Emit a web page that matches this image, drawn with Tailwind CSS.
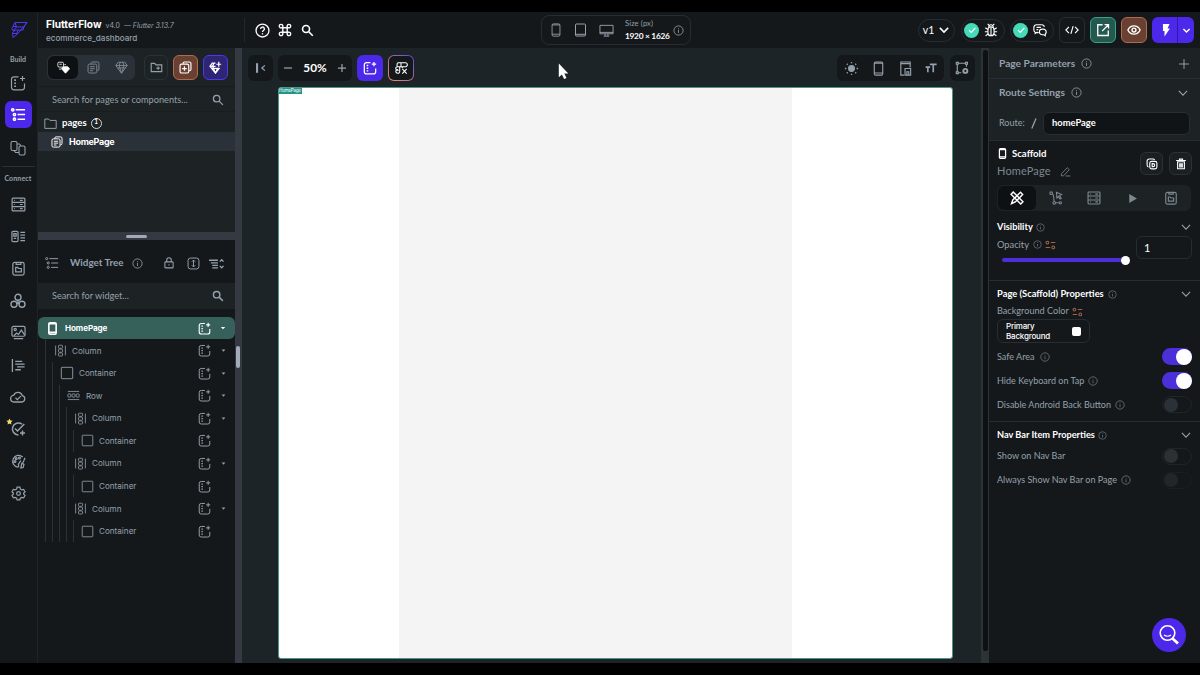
<!DOCTYPE html>
<html lang="en">
<head>
    <meta charset="UTF-8">
    <meta name="viewport" content="width=device-width, initial-scale=1.0">
    <title>FlutterFlow</title>
    <script src="https://cdn.jsdelivr.net/npm/@tailwindcss/browser@4"></script>
</head>
<body class="bg-black w-[1200px] h-[675px] overflow-hidden py-3 font-['Lato','Liberation_Sans',sans-serif] text-[#95a1ac] leading-none">

    <!-- Icon sprite -->
    <svg class="hidden">
        <defs>
            <symbol id="logo" viewBox="0 0 18 18"><path d="M5 1.500h12l-3 4.500H6.500zM5 1.500 3 5.500l-1.200 2 1.200 2L6.500 6M5 9h8l1-3M5 9l-2.500 3 .5 4.500L6.500 14 8 9M3 9.500 5 9M2.500 12.500H8L17 1.500M3 5.500h3.500" /></symbol>
            <symbol id="add-widget" viewBox="0 0 16 16"><path d="M8.500 1.800H4a2.500 2.500 0 0 0-2.500 2.500v8A2.500 2.500 0 0 0 4 14.800h8a2.500 2.500 0 0 0 2.500-2.500V8.500M12.500 1v5M10 3.500h5" /><path d="M4.200 4.300h1.800v1.600H4.200zM4.200 7.400h1.800V9H4.200zM4.200 10.500h1.800v1.600H4.200z" fill="currentColor" stroke="none"/></symbol>
            <symbol id="tree" viewBox="0 0 16 16"><circle cx="1.900" cy="3" r="1.200"/><circle cx="3.700" cy="8" r="1.200"/><circle cx="3.700" cy="13" r="1.200"/><path d="M5 3h10M7 8h8M7 13h8" /></symbol>
            <symbol id="storyboard" viewBox="0 0 16 16"><rect x="1" y="1.500" width="6" height="9" rx="1.500"/><rect x="9" y="6" width="6" height="9" rx="1.500"/><path d="M7 4h2.500l1.500 2M4 10.500l1.500 2H9" /></symbol>
            <symbol id="database" viewBox="0 0 16 16"><rect x="1.200" y="1.200" width="13.600" height="13.600" rx="1"/><path d="M1.200 5.700h13.600M1.200 10.300h13.600M9.500 3.500h3M9.500 8h3M9.500 12.500h3M3.500 3.500h.8M3.500 8h.8M3.500 12.500h.8" /></symbol>
            <symbol id="datatype" viewBox="0 0 16 16"><rect x="1" y="2.500" width="6.500" height="11" rx="1.200"/><path d="M3 5h2.500v2.500H3zM3 10h2.500M10 3.500h5M10 6.500h5M10 9.500h5M10 12.500h5" /></symbol>
            <symbol id="clip" viewBox="0 0 16 16"><rect x="2" y="1.500" width="12" height="13.500" rx="2"/><path d="M5.500 1.500v2h5v-2M5 11.500V6.800h2l1 1.200h3v3.500z" /></symbol>
            <symbol id="api" viewBox="0 0 16 16"><circle cx="8" cy="4.300" r="3"/><circle cx="4" cy="11.300" r="3"/><circle cx="12" cy="11.300" r="3"/><path d="M8 7.300v2.500L6.500 11M8 9.800l1.500 1.200" /></symbol>
            <symbol id="media" viewBox="0 0 16 16"><rect x="1" y="1.500" width="14" height="10.500" rx="1.500"/><circle cx="4.500" cy="4.700" r="1.200"/><path d="M3 11.500l3-3 2 1.500 3-4.500 3.500 5M3 14.600h10" /></symbol>
            <symbol id="textbars" viewBox="0 0 16 16"><path d="M1.500 1v14M4.500 3.500H12M4.500 6.500h10M6.500 9.500h8M4.500 12.500h6" /></symbol>
            <symbol id="cloud" viewBox="0 0 16 16"><path d="M4.200 13h7.600a3.200 3.200 0 0 0 .5-6.300A4.500 4.500 0 0 0 3.800 6.200a3.400 3.400 0 0 0 .4 6.800zM5.500 8.800l1.800 1.800 3.500-3.500" /></symbol>
            <symbol id="taskcheck" viewBox="0 0 16 16"><path d="M12 3.200A6 6 0 1 0 8.500 14M5 7.500l2.500 2.500 6.800-7M12.500 9.500v5M10 12h5" /></symbol>
            <symbol id="palette" viewBox="0 0 16 16"><path d="M12.500 3.200A6.300 6.300 0 1 0 7.500 14c1.500-.2 0-2 1-3" /><circle cx="4.200" cy="8" r="1"/><circle cx="5.500" cy="4.900" r="1"/><circle cx="9" cy="4.200" r="1"/><path d="M15 4l-2.500 6M11.500 10l2.300 1-.8 3.500-2.500.5zM10.500 7l-3 4.500" /></symbol>
            <symbol id="gear" viewBox="0 0 16 16"><path d="M6.500 1.300h3l.5 2 1.500.9 2-.6 1.500 2.600-1.500 1.400v1l1.500 1.500-1.500 2.500-2-.5-1.500.8-.5 2h-3l-.5-2-1.500-.8-2 .5L1 10.100l1.500-1.500v-1L1 6.200l1.500-2.600 2 .6L6 3.300z" /><circle cx="8" cy="8.100" r="2"/></symbol>
            <symbol id="search" viewBox="0 0 16 16"><circle cx="6.200" cy="6.200" r="4.300"/><path d="M9.500 9.500l5 5" /></symbol>
            <symbol id="pages" viewBox="0 0 16 16"><path d="M5 3.500V3a1.800 1.800 0 0 1 1.800-1.800h6A1.800 1.800 0 0 1 14.700 3v7a1.800 1.800 0 0 1-1.800 1.800h-.4" /><rect x="1.300" y="3.800" width="10.700" height="11" rx="1.800"/><path d="M3.800 7h5.700M3.800 9.500h5.700M3.800 12h3.500" /></symbol>
            <symbol id="gem" viewBox="0 0 16 16"><path d="M4 1.500h8l3 4L8 15 1 5.500zM1 5.500h14M5 5.500l3 9.500 3-9.500-1.500-4M5 5.500l1.500-4M3 8.500h10" /></symbol>
            <symbol id="pagegem" viewBox="0 0 16 16"><rect x="1" y="1.500" width="7" height="6" rx="1.500"/><path d="M3 4h3M2.500 10h2.500M9 4.500h2" /><path d="M7.800 7h5.400l2.300 2.500-5 5.500-5-5.500z" fill="currentColor"/></symbol>
            <symbol id="gemplus" viewBox="0 0 16 16"><path d="M8 2.500H4L1.200 6.500 8 15l5-6.500M1.200 6.500H8M4.500 6.500 8 15l2.500-6M4.500 6.500l1.500-4M12 1v6M9 4h6M2.800 9h10" /></symbol>
            <symbol id="folder" viewBox="0 0 16 16"><path d="M1 2.500h4.800l1.500 1.700H15V14H1z" /></symbol>
            <symbol id="folderplus" viewBox="0 0 16 16"><path d="M1.500 3h4.300l1.500 1.700h7.200V13h-13zM10 6.700v4M8 8.700h4" /></symbol>
            <symbol id="addpage" viewBox="0 0 16 16"><path d="M5 3.500V3a1.800 1.800 0 0 1 1.800-1.800h6A1.800 1.800 0 0 1 14.700 3v7a1.800 1.800 0 0 1-1.800 1.800h-.4" /><rect x="1.300" y="3.800" width="10.700" height="11" rx="1.800"/><path d="M6.700 6.500v5.600M3.900 9.300h5.600" /></symbol>
            <symbol id="info" viewBox="0 0 16 16"><circle cx="8" cy="8" r="6.700"/><path d="M8 7v4.500M8 4.300v1.200" /></symbol>
            <symbol id="lock" viewBox="0 0 16 16"><rect x="2.500" y="6.500" width="11" height="8" rx="1"/><path d="M5 6.500V4a3 3 0 0 1 6 0v2.500M8 9.800v1.600" /></symbol>
            <symbol id="expand" viewBox="0 0 16 16"><rect x="1.300" y="1.300" width="13.400" height="13.400" rx="3"/><path d="M8 4v8M6 5.800l2-2 2 2M6 10.200l2 2 2-2" /></symbol>
            <symbol id="collapse" viewBox="0 0 16 16"><path d="M0 4.500h9.500M2 7.300h7.500M3.500 10h6M3.500 12.700h6M11.500 6l2-2 2 2M11.500 10.500l2 2 2-2" /></symbol>
            <symbol id="phone" viewBox="0 0 16 16"><rect x="3.500" y="1" width="9" height="14" rx="1.500"/><path d="M3.500 12.800h9M3.500 2.200h9" /></symbol>
            <symbol id="column" viewBox="0 0 16 16"><path d="M2 2v12M14 2v12" /><rect x="5.500" y="1.500" width="5" height="3.800" rx="1"/><rect x="5.500" y="6.300" width="5" height="3.800" rx="1"/><rect x="5.500" y="11" width="5" height="3.800" rx="1"/></symbol>
            <symbol id="row" viewBox="0 0 16 16"><path d="M1 3h14M1 13h14" /><rect x="1" y="6" width="3.700" height="4" rx="1"/><rect x="6.200" y="6" width="3.700" height="4" rx="1"/><rect x="11.300" y="6" width="3.700" height="4" rx="1"/></symbol>
            <symbol id="box" viewBox="0 0 16 16"><rect x="1.500" y="1.500" width="13" height="13" rx=".8"/></symbol>
            <symbol id="caret" viewBox="0 0 8 8"><path d="M1 2.500h6L4 5.800z" fill="currentColor" stroke="none"/></symbol>
            <symbol id="chevron" viewBox="0 0 16 16"><path d="M2.500 5.200 8 10.800l5.500-5.600" /></symbol>
            <symbol id="help" viewBox="0 0 16 16"><circle cx="8" cy="8" r="6.900"/><path d="M6 6.300a2 2 0 1 1 3 1.700c-.8.500-1 .8-1 1.600M8 11v1.200" /></symbol>
            <symbol id="cmd" viewBox="0 0 16 16"><path d="M5.500 5.500h5v5h-5zM5.500 5.500H3.800A2 2 0 1 1 5.500 3.800zM10.500 5.500V3.800A2 2 0 1 1 12.200 5.500zM10.500 10.500h1.700a2 2 0 1 1-1.700 1.700zM5.500 10.500v1.700a2 2 0 1 1-1.700-1.700z" /></symbol>
            <symbol id="monitor" viewBox="0 0 16 16"><path d="M1 2.500h14v9H1zM1 10h14M5 14h6M6.500 11.500V14M9.500 11.500V14" /></symbol>
            <symbol id="bug" viewBox="0 0 16 16"><rect x="4.500" y="4.500" width="7" height="10" rx="3.500"/><path d="M8 5v9M5.500 4.500a2.500 2.500 0 0 1 5 0M5.500 2.500 4.300 1M10.500 2.500 11.700 1M4.500 7.500 1.500 5.500M4.500 10h-3.500M4.800 12.500l-3 2M11.500 7.500l3-2M11.500 10H15M11.200 12.500l3 2" /></symbol>
            <symbol id="chat" viewBox="0 0 16 16"><path d="M2.500 10.500V12l2-1.300h1M6.500 11H4a3 3 0 0 1-3-3V5a3 3 0 0 1 3-3h6a3 3 0 0 1 3 2.500M4 5h5M4 7.500h2" /><path d="M14 14.500v-1.800A3.300 3.300 0 0 0 11.500 7h-1a3.200 3.200 0 0 0 0 6.400h1.800z" /></symbol>
            <symbol id="code" viewBox="0 0 16 16"><path d="M4.500 4.500 1 8l3.500 3.500M11.500 4.500 15 8l-3.500 3.500M9.300 3.500l-2.600 9" /></symbol>
            <symbol id="open" viewBox="0 0 16 16"><path d="M7.500 2H2v12.300h12V8.500M7 9.300 13.800 2.300M9.800 1.800h4.500v4.500" /></symbol>
            <symbol id="eye" viewBox="0 0 16 16"><path d="M1 8c1.500-3 4-4.700 7-4.700S13.500 5 15 8c-1.500 3-4 4.700-7 4.700S2.500 11 1 8z" /><circle cx="8" cy="8" r="2.200"/></symbol>
            <symbol id="bolt" viewBox="0 0 16 16"><path d="M4.500 1H12L9.800 6.300H12.500L6.300 15.500V9H4.500z" fill="currentColor" stroke="none"/></symbol>
            <symbol id="collapseleft" viewBox="0 0 16 16"><path d="M3.500 2.500v11" stroke-width="2.400"/><path d="M12.500 5 9 8l3.500 3" /></symbol>
            <symbol id="custom" viewBox="0 0 16 16"><path d="M3.500 6V3.500A1.500 1.500 0 0 1 5 2h8a2 2 0 0 1 0 4.500H4a2 2 0 0 0 0 4h1.500M6.500 6.500V12a2.200 2.200 0 1 1-2-2.300M8 2v4.500M10.500 6.500 9 8M9.500 9l5 5.500M14.500 9l-5 5.500" /></symbol>
            <symbol id="sun" viewBox="0 0 16 16"><circle cx="8" cy="8" r="3" fill="currentColor"/><path d="M8 1v1.500M8 13.500V15M1 8h1.500M13.500 8H15M3 3l1 1M12 12l1 1M3 13l1-1M12 4l1-1" /></symbol>
            <symbol id="devices" viewBox="0 0 16 16"><path d="M6.500 15H3V1h10v6M3 2.800h10" /><path d="M7.500 15V8h6v7zM9.500 15v-3.500h2V15" /></symbol>
            <symbol id="textsize" viewBox="0 0 16 16"><path d="M6.500 3.200h9M11 3.200V13.500M.8 6.800h6M3.800 6.800v6.700" stroke-width="2.200"/></symbol>
            <symbol id="nodes" viewBox="0 0 16 16"><path d="M1.500 1.500h2.200v2.200H1.500zM12 1.500h2.200v2.200H12zM1.500 12.300h2.200v2.200H1.500zM3.700 2.600H12M2.600 3.700v8.600M13.100 3.700v3M3.700 13.400h3.500" /><circle cx="11.800" cy="11.300" r="2.300" stroke-width="2.200"/></symbol>
            <symbol id="plus" viewBox="0 0 16 16"><path d="M8 1.500v13M1.500 8h13" /></symbol>
            <symbol id="minus" viewBox="0 0 16 16"><path d="M1.500 8h13" /></symbol>
            <symbol id="copy" viewBox="0 0 16 16"><rect x="5" y="4.500" width="9.500" height="10" rx="2.500"/><path d="M3.500 12A2.500 2.500 0 0 1 1.500 9.500V4A2.700 2.700 0 0 1 4.200 1.300H9A2.500 2.500 0 0 1 11.500 2.500M8.200 7.500v4h1.300a1.800 1.800 0 0 0 0-4z" /></symbol>
            <symbol id="trash" viewBox="0 0 16 16"><path d="M3.500 5h9v9.300h-9zM1.500 3.300h13M6 3V1.500h4V3M6.300 7v5.500M9.700 7v5.500M8 7v5.500" /></symbol>
            <symbol id="pencil" viewBox="0 0 16 16"><path d="M2 11.500 10.500 2.500l3 2.800L5 14.300H2zM8 14.500h7" /></symbol>
            <symbol id="design" viewBox="0 0 16 16"><path d="M3.700 1.200 1.200 3.700 12.300 14.800l2.500-2.500zM12 1.500l2.500 2.500L6 12.500l-4.300 2 1.500-4.300z" /></symbol>
            <symbol id="actions" viewBox="0 0 16 16"><circle cx="2.500" cy="2.500" r="1.500"/><circle cx="6" cy="13.500" r="1.500"/><circle cx="13" cy="13.500" r="1.300"/><path d="M4 3.500c2 1 1 6 2 8.500M7.500 13.500h4M8.500 1.500l6 2.500-2.500 1.300 2 3-1.300.8-2-3L9 8z" /></symbol>
            <symbol id="play" viewBox="0 0 16 16"><path d="M4 2.500 13.500 8 4 13.500z" fill="currentColor" stroke="none"/></symbol>
            <symbol id="var" viewBox="0 0 16 14"><circle cx="3.500" cy="3.500" r="2"/><circle cx="12" cy="10.500" r="2"/><path d="M8.500 3.500H15M1 10.500h6.500" /></symbol>
            <symbol id="check" viewBox="0 0 16 16"><path d="M4 8.300 7 11.300l5.500-6" /></symbol>
            <symbol id="star" viewBox="0 0 16 16"><path d="M8 1l2.200 4.700 5.100.6-3.800 3.500 1 5.100L8 12.400l-4.500 2.500 1-5.100L.7 6.300l5.100-.6z" fill="currentColor" stroke="none"/></symbol>
        </defs>
    </svg>

    <!-- Header -->
    <header class="flex items-center h-9 bg-[#14181b]">
        <div class="w-[38px] h-9 flex items-center justify-center border-r border-[#1e2326]">
            <svg class="size-[18px] fill-none stroke-[#4b39ef] stroke-1"><use href="#logo"/></svg>
        </div>
        <div class="w-[206px] h-9 pl-2 pt-[7px] font-['Inter',sans-serif]">
            <div class="flex items-baseline h-[13px] whitespace-nowrap">
                <span class="text-[10.100px] font-bold text-white">FlutterFlow</span>
                <span class="text-[7px] ml-1">v4.0</span>
                <span class="text-[7px] ml-1 italic tracking-[-0.05px]">— Flutter 3.13.7</span>
            </div>
            <div class="text-[8.150px] font-medium mt-[2px]">ecommerce_dashboard</div>
        </div>
        <div class="flex items-center gap-2 border-l border-[#22282b] h-6 pl-[10px] text-white w-[297px]">
            <svg class="size-[15px] fill-none stroke-current stroke-[1.400]"><use href="#help"/></svg>
            <svg class="size-[14px] fill-none stroke-current stroke-[1.600]"><use href="#cmd"/></svg>
            <svg class="size-[13px] ml-px fill-none stroke-current stroke-2"><use href="#search"/></svg>
        </div>
        <div class="flex items-center w-[150px] h-[30px] rounded-lg border border-[#262d34] pl-[7px]">
            <svg class="size-[14px] fill-none stroke-current stroke-1"><use href="#phone"/></svg>
            <svg class="w-[17px] h-[14px] ml-[9px] fill-none stroke-current stroke-1" viewBox="0 0 17 14"><path d="M4.500 1h8a1 1 0 0 1 1 1v10a1 1 0 0 1-1 1h-8a1 1 0 0 1-1-1V2a1 1 0 0 1 1-1zM3.500 11.300h10"/></svg>
            <svg class="size-[15px] ml-[10px] fill-none stroke-current stroke-1"><use href="#monitor"/></svg>
            <div class="ml-[11px] w-[48px] whitespace-nowrap">
                <div class="text-[7.500px] tracking-[0.150px]">Size (px)</div>
                <div class="text-[8.300px] font-bold text-white mt-1 tracking-[-0.250px]">1920 × 1626</div>
            </div>
            <svg class="size-[11px] fill-none stroke-current stroke-[1.200]"><use href="#info"/></svg>
        </div>
        <div class="flex items-center ml-auto pr-[6px] text-white">
            <div class="flex items-center justify-center gap-1 w-[37px] h-[23px] rounded-full border border-[#262d34] text-[10.500px]">v1
                <svg class="size-3 fill-none stroke-current stroke-2"><use href="#chevron"/></svg>
            </div>
            <div class="flex items-center gap-[5px] w-[44px] h-[23px] pl-[2px] ml-[6px] rounded-full border border-[#262d34]">
                <span class="flex size-[15px] rounded-full bg-[#45dbb8] items-center justify-center"><svg class="size-3 fill-none stroke-white stroke-[1.500]"><use href="#check"/></svg></span>
                <svg class="size-[14px] fill-none stroke-current stroke-[1.300]"><use href="#bug"/></svg>
            </div>
            <div class="flex items-center gap-[5px] w-[44px] h-[23px] pl-[2px] ml-[5px] rounded-full border border-[#262d34]">
                <span class="flex size-[15px] rounded-full bg-[#45dbb8] items-center justify-center"><svg class="size-3 fill-none stroke-white stroke-[1.500]"><use href="#check"/></svg></span>
                <svg class="size-[14px] fill-none stroke-current stroke-[1.300]"><use href="#chat"/></svg>
            </div>
            <div class="flex items-center justify-center w-[26px] h-[26px] ml-[5px] rounded-md border border-[#262d34]">
                <svg class="size-[14px] fill-none stroke-current stroke-[1.300]"><use href="#code"/></svg>
            </div>
            <div class="flex items-center justify-center w-[26px] h-[26px] ml-[5px] rounded-md border border-[#39a08a] bg-[#24594f]">
                <svg class="size-[14px] fill-none stroke-current stroke-[1.500]"><use href="#open"/></svg>
            </div>
            <div class="flex items-center justify-center w-[26px] h-[26px] ml-[5px] rounded-md border border-[#b06a4c] bg-[#6a4033]">
                <svg class="size-[14px] fill-none stroke-current stroke-[1.600]"><use href="#eye"/></svg>
            </div>
            <div class="flex w-[42px] h-[26px] ml-[5px] rounded-md bg-[#4b28ea]">
                <div class="flex items-center justify-center w-[26px] border-r border-[#2f1c9c] pl-[2px]"><svg class="size-[14px]"><use href="#bolt"/></svg></div>
                <div class="flex flex-1 items-center justify-center"><svg class="size-[9px] fill-none stroke-current stroke-[2.500]"><use href="#chevron"/></svg></div>
            </div>
        </div>
    </header>

    <div class="flex h-[615px]">
        <!-- Rail -->
        <nav class="flex flex-col items-center shrink-0 w-[38px] pr-px bg-[#14181b] border-r border-[#1e2326] text-[7px] font-bold">
            <div class="h-[19px] pt-[8px]">Build</div>
            <div class="flex items-center justify-center h-8"><svg class="size-[16px] fill-none stroke-current stroke-[1.200]"><use href="#add-widget"/></svg></div>
            <div class="flex items-center justify-center size-[27px] mt-[2px] mb-px rounded-md bg-[#4b28ea] text-white"><svg class="size-[15px] fill-none stroke-current stroke-[1.600]"><use href="#tree"/></svg></div>
            <div class="flex items-center justify-center h-[37px]"><svg class="size-[16px] fill-none stroke-current stroke-[1.100]"><use href="#storyboard"/></svg></div>
            <div class="w-[33px] h-px bg-[#2b3138]"></div>
            <div class="h-[21px] pt-[8px] tracking-[0.150px]">Connect</div>
            <div class="flex items-center justify-center h-[32.200px]"><svg class="size-[15px] fill-none stroke-current stroke-[1.300]"><use href="#database"/></svg></div>
            <div class="flex items-center justify-center h-[32.200px]"><svg class="size-[15px] fill-none stroke-current stroke-[1.300]"><use href="#datatype"/></svg></div>
            <div class="flex items-center justify-center h-[32.200px]"><svg class="size-[15px] fill-none stroke-current stroke-[1.300]"><use href="#clip"/></svg></div>
            <div class="flex items-center justify-center h-[32.200px]"><svg class="size-[16px] fill-none stroke-current stroke-[1.400]"><use href="#api"/></svg></div>
            <div class="flex items-center justify-center h-[32.200px]"><svg class="size-[15px] fill-none stroke-current stroke-[1.300]"><use href="#media"/></svg></div>
            <div class="flex items-center justify-center h-[32.200px]"><svg class="size-[15px] fill-none stroke-current stroke-[1.400]"><use href="#textbars"/></svg></div>
            <div class="flex items-center justify-center h-[32.200px]"><svg class="size-[16px] fill-none stroke-current stroke-[1.300]"><use href="#cloud"/></svg></div>
            <div class="relative flex items-center justify-center h-[32.200px]">
                <svg class="size-[16px] fill-none stroke-current stroke-[1.500]"><use href="#taskcheck"/></svg>
                <svg class="absolute -left-[4px] top-[5px] size-[7px] text-[#f5dd68]"><use href="#star"/></svg>
            </div>
            <div class="flex items-center justify-center h-[32.200px]"><svg class="size-[15px] fill-none stroke-current stroke-[1.300]"><use href="#palette"/></svg></div>
            <div class="flex items-center justify-center h-[32.200px]"><svg class="size-[15px] fill-none stroke-current stroke-[1.300]"><use href="#gear"/></svg></div>
        </nav>

        <!-- Left panel -->
        <aside class="flex flex-col shrink-0 w-[197px] bg-[#14181b]">
            <div class="flex flex-col h-[184px] bg-[#1d2225]">
                <div class="flex items-center h-[39px] pl-[9px] border-b border-[#171b1e]">
                    <div class="flex w-[88px] h-[25px] rounded-md bg-[#2b3138] border border-[#2b3138]">
                        <div class="flex items-center justify-center w-[30px] rounded-md bg-[#0e1113] text-white"><svg class="size-[13px] fill-none stroke-current stroke-1"><use href="#pagegem"/></svg></div>
                        <div class="flex items-center justify-center w-[30px] text-[#7d8790]"><svg class="size-[13px] fill-none stroke-current stroke-[1.200]"><use href="#pages"/></svg></div>
                        <div class="flex items-center justify-center w-[26px] text-[#7d8790]"><svg class="size-[13px] fill-none stroke-current stroke-[1.200]"><use href="#gem"/></svg></div>
                    </div>
                    <div class="flex items-center justify-center w-[24px] h-[25px] ml-[9px] rounded-md border border-[#2b3138]"><svg class="size-[13px] fill-none stroke-current stroke-[1.400]"><use href="#folderplus"/></svg></div>
                    <div class="flex items-center justify-center w-[25px] h-[25px] ml-[5px] rounded-md border border-[#b06a4c] bg-[#6a4033] text-white"><svg class="size-[13px] fill-none stroke-current stroke-[1.400]"><use href="#addpage"/></svg></div>
                    <div class="flex items-center justify-center w-[25px] h-[25px] ml-[5px] rounded-md border border-[#4b39ef] bg-[#2f2575] text-white"><svg class="size-[13px] fill-none stroke-current stroke-[1.500]"><use href="#gemplus"/></svg></div>
                </div>
                <div class="flex items-center justify-between h-[25px] pl-[14px] pr-[11px] pt-px border-b border-[#191d20] text-[9.200px]">
                    <span>Search for pages or components...</span>
                    <svg class="size-[12px] fill-none stroke-current stroke-[1.700]"><use href="#search"/></svg>
                </div>
                <div class="flex items-center h-5 pl-[6px] pt-[2px] text-[9.600px] font-bold text-white">
                    <svg class="size-[13px] fill-none stroke-[#95a1ac] stroke-[1.200]"><use href="#folder"/></svg>
                    <span class="ml-[5px]">pages</span>
                    <span class="flex items-center justify-center size-[11px] ml-[4px] pb-px rounded-full border border-white/80 text-[6.500px]">1</span>
                </div>
                <div class="flex items-center h-[19px] pl-[13px] bg-[#2b3138] text-[9px] font-bold font-['Inter',sans-serif] text-white tracking-[-0.300px]">
                    <svg class="size-[12px] fill-none stroke-current stroke-[1.300]"><use href="#pages"/></svg>
                    <span class="ml-[6px]">HomePage</span>
                </div>
            </div>
            <div class="flex items-center justify-center h-2 bg-[#353942]"><div class="w-[21px] h-[3px] rounded-full bg-[#a5a7b8]"></div></div>
            <div class="flex items-center h-[43px] pl-[7px] pr-[11px] pt-[3px]">
                <svg class="size-[14px] fill-none stroke-current stroke-[1.100]"><use href="#tree"/></svg>
                <span class="ml-[11px] text-[9.900px] font-bold">Widget Tree</span>
                <svg class="size-[11px] ml-2 fill-none stroke-current stroke-[1.200]"><use href="#info"/></svg>
                <svg class="size-[12px] ml-auto fill-none stroke-current stroke-[1.400]"><use href="#lock"/></svg>
                <svg class="size-[13px] ml-3 fill-none stroke-current stroke-[1.200]"><use href="#expand"/></svg>
                <svg class="size-[15px] ml-[9px] fill-none stroke-current stroke-[1.400]"><use href="#collapse"/></svg>
            </div>
            <div class="flex items-center justify-between h-[26px] pl-[14px] pr-[11px] bg-[#1d2225] text-[9.200px]">
                <span>Search for widget...</span>
                <svg class="size-[12px] fill-none stroke-current stroke-[1.900]"><use href="#search"/></svg>
            </div>

            <!-- Tree -->
            <div class="mt-2 font-['Inter',sans-serif] text-[8.150px]">
                <div class="flex items-center h-[22px] rounded-md bg-[#36605a] pl-2 pr-[9px] text-white font-bold">
                    <svg class="size-[13px] fill-none stroke-current stroke-2"><use href="#phone"/></svg>
                    <span class="ml-[6px] tracking-[-0.100px]">HomePage</span>
                    <svg class="size-[13px] ml-auto mr-[9px] fill-none stroke-current stroke-[1.400]"><use href="#add-widget"/></svg>
                    <svg class="size-[6px]"><use href="#caret"/></svg>
                </div>
                <div class="ml-[7px] pt-[0.500px] border-l border-[#2b3138]">
                    <div class="flex items-center h-[22.550px] pl-2 pr-[9px]">
                        <svg class="size-[13px] fill-none stroke-current stroke-1"><use href="#column"/></svg>
                        <span class="ml-[5px]">Column</span>
                        <svg class="size-[13px] ml-auto mr-[10px] fill-none stroke-current stroke-[1.200]"><use href="#add-widget"/></svg>
                        <svg class="size-[5px]"><use href="#caret"/></svg>
                    </div>
                    <div class="ml-[6px] border-l border-[#2b3138]">
                        <div class="flex items-center h-[22.550px] pl-[7px] pr-[9px]">
                            <svg class="size-[14px] fill-none stroke-current stroke-1"><use href="#box"/></svg>
                            <span class="ml-[5px]">Container</span>
                            <svg class="size-[13px] ml-auto mr-[10px] fill-none stroke-current stroke-[1.200]"><use href="#add-widget"/></svg>
                            <svg class="size-[5px]"><use href="#caret"/></svg>
                        </div>
                        <div class="ml-[6px] border-l border-[#2b3138]">
                            <div class="flex items-center h-[22.550px] pl-[7px] pr-[9px]">
                                <svg class="size-[13px] fill-none stroke-current stroke-1"><use href="#row"/></svg>
                                <span class="ml-[6px]">Row</span>
                                <svg class="size-[13px] ml-auto mr-[10px] fill-none stroke-current stroke-[1.200]"><use href="#add-widget"/></svg>
                                <svg class="size-[5px]"><use href="#caret"/></svg>
                            </div>
                            <div class="ml-[6px] border-l border-[#2b3138]">
                                <div class="flex items-center h-[22.550px] pl-[7px] pr-[9px]">
                                    <svg class="size-[13px] fill-none stroke-current stroke-1"><use href="#column"/></svg>
                                    <span class="ml-[5px]">Column</span>
                                    <svg class="size-[13px] ml-auto mr-[10px] fill-none stroke-current stroke-[1.200]"><use href="#add-widget"/></svg>
                                    <svg class="size-[5px]"><use href="#caret"/></svg>
                                </div>
                                <div class="flex items-center h-[22.550px] ml-[6px] border-l border-[#2b3138] pl-[7px] pr-6">
                                    <svg class="size-[13px] fill-none stroke-current stroke-1"><use href="#box"/></svg>
                                    <span class="ml-[5px]">Container</span>
                                    <svg class="size-[13px] ml-auto fill-none stroke-current stroke-[1.200]"><use href="#add-widget"/></svg>
                                </div>
                                <div class="flex items-center h-[22.550px] pl-[7px] pr-[9px]">
                                    <svg class="size-[13px] fill-none stroke-current stroke-1"><use href="#column"/></svg>
                                    <span class="ml-[5px]">Column</span>
                                    <svg class="size-[13px] ml-auto mr-[10px] fill-none stroke-current stroke-[1.200]"><use href="#add-widget"/></svg>
                                    <svg class="size-[5px]"><use href="#caret"/></svg>
                                </div>
                                <div class="flex items-center h-[22.550px] ml-[6px] border-l border-[#2b3138] pl-[7px] pr-6">
                                    <svg class="size-[13px] fill-none stroke-current stroke-1"><use href="#box"/></svg>
                                    <span class="ml-[5px]">Container</span>
                                    <svg class="size-[13px] ml-auto fill-none stroke-current stroke-[1.200]"><use href="#add-widget"/></svg>
                                </div>
                                <div class="flex items-center h-[22.550px] pl-[7px] pr-[9px]">
                                    <svg class="size-[13px] fill-none stroke-current stroke-1"><use href="#column"/></svg>
                                    <span class="ml-[5px]">Column</span>
                                    <svg class="size-[13px] ml-auto mr-[10px] fill-none stroke-current stroke-[1.200]"><use href="#add-widget"/></svg>
                                    <svg class="size-[5px]"><use href="#caret"/></svg>
                                </div>
                                <div class="flex items-center h-[22.550px] ml-[6px] border-l border-[#2b3138] pl-[7px] pr-6">
                                    <svg class="size-[13px] fill-none stroke-current stroke-1"><use href="#box"/></svg>
                                    <span class="ml-[5px]">Container</span>
                                    <svg class="size-[13px] ml-auto fill-none stroke-current stroke-[1.200]"><use href="#add-widget"/></svg>
                                </div>
                            </div>
                        </div>
                    </div>
                </div>
            </div>
        </aside>

        <div class="shrink-0 w-[7px] bg-[#353942] pt-[298px]"><div class="w-1 h-[22px] ml-px rounded-full bg-[#a3abb8]"></div></div>

        <!-- Canvas -->
        <main class="w-[739px] shrink-0 bg-[#1d2428]">
            <div class="flex items-center h-[39px] pl-[6px] pr-[6px] pt-px">
                <div class="flex items-center justify-center w-[25px] h-[26px] rounded-md bg-[#14181b]"><svg class="size-[14px] fill-none stroke-current stroke-[1.500]"><use href="#collapseleft"/></svg></div>
                <div class="flex items-center justify-between w-[74px] h-[26px] ml-[5px] px-[5px] rounded-md bg-[#14181b]">
                    <svg class="size-[10px] fill-none stroke-current stroke-2"><use href="#minus"/></svg>
                    <span class="text-[11.800px] font-bold text-white">50%</span>
                    <svg class="size-[10px] fill-none stroke-current stroke-2"><use href="#plus"/></svg>
                </div>
                <div class="flex items-center justify-center w-[26px] h-[26px] ml-[5px] rounded-md bg-[#4b28ea] text-white"><svg class="size-[14px] fill-none stroke-current stroke-[1.400]"><use href="#add-widget"/></svg></div>
                <div class="w-[26px] h-[26px] ml-[5px] p-px rounded-md bg-linear-to-tr from-[#ee8b60] via-[#a56a9c] to-[#5b3fd8]">
                    <div class="flex items-center justify-center size-full rounded-[5px] bg-[#14181b] text-white"><svg class="size-[14px] fill-none stroke-current stroke-[1.200]"><use href="#custom"/></svg></div>
                </div>
                <div class="flex items-center justify-between w-[107px] h-[26px] ml-auto px-[7px] rounded-md bg-[#14181b]">
                    <svg class="size-[15px] fill-none stroke-current stroke-[1.400]"><use href="#sun"/></svg>
                    <svg class="size-[15px] fill-none stroke-current stroke-[1.200]"><use href="#phone"/></svg>
                    <svg class="size-[15px] fill-none stroke-current stroke-[1.200]"><use href="#devices"/></svg>
                    <svg class="size-[12px] fill-none stroke-current"><use href="#textsize"/></svg>
                </div>
                <div class="flex items-center justify-center w-[25px] h-[26px] ml-[6px] pr-px rounded-md bg-[#14181b]"><svg class="size-[14px] fill-none stroke-current stroke-[1.300]"><use href="#nodes"/></svg></div>
            </div>
            <div class="relative flex justify-center w-[675px] h-[572px] ml-[36px] rounded-[3px] border border-[#4f9488] bg-white overflow-hidden">
                <div class="w-[393px] mr-[41px] bg-[#f4f4f4]"></div>
                <span class="absolute left-0 top-0 w-[23px] h-[6px] bg-[#249689] text-white text-[4.500px] leading-[6px] tracking-[-0.200px] font-['Inter',sans-serif] whitespace-nowrap">HomePage</span>
            </div>
        </main>

        <div class="shrink-0 w-2 bg-[#2d3235] pt-[2px] pl-[2px]"><div class="w-[5px] h-[601px] rounded-full bg-[#0e1113]"></div></div>

        <!-- Properties panel -->
        <aside class="flex-1 bg-[#14181b] text-[9.050px]">
            <div class="h-[93px] bg-[#1d2225] border-b border-[#262d34]">
                <div class="flex items-center h-[31px] pl-[10px] pr-[10px] pt-px border-b border-[#262d34] font-bold text-[10.200px]">
                    <span>Page Parameters</span>
                    <svg class="size-[11px] ml-[6px] fill-none stroke-current stroke-[1.200]"><use href="#info"/></svg>
                    <svg class="size-[12px] ml-auto fill-none stroke-current stroke-[1.300]"><use href="#plus"/></svg>
                </div>
                <div class="flex items-center h-[27px] pl-[10px] pr-[11px] font-bold text-[10.200px]">
                    <span>Route Settings</span>
                    <svg class="size-[11px] ml-[6px] fill-none stroke-current stroke-[1.200]"><use href="#info"/></svg>
                    <svg class="size-[12px] ml-auto fill-none stroke-current stroke-[1.500]"><use href="#chevron"/></svg>
                </div>
                <div class="flex items-center h-[34px] pl-[10px]">
                    <span class="w-[32px]">Route:</span>
                    <svg class="w-[6px] h-[11px] fill-none stroke-current stroke-[1.300]" viewBox="0 0 6 11"><path d="M5 .5.8 10.500"/></svg>
                    <div class="flex items-center w-[147px] h-[23px] ml-[6px] pl-[8px] rounded-md border border-[#262d34] bg-[#111417] text-white font-bold text-[9.400px]">homePage</div>
                </div>
            </div>
            <div class="flex items-center h-[44px] pl-2 pr-2">
                <div class="pb-[2px]">
                    <div class="flex items-center h-[17px] text-white font-bold text-[9.600px]">
                        <svg class="size-[11px] fill-none stroke-current stroke-[1.800]"><use href="#phone"/></svg>
                        <span class="ml-1">Scaffold</span>
                    </div>
                    <div class="flex items-center h-[17px] text-[11px] text-[#7d8790]">
                        <span class="tracking-[0.150px]">HomePage</span>
                        <svg class="size-[11px] ml-[9px] mt-[2px] fill-none stroke-current stroke-[1.200]"><use href="#pencil"/></svg>
                    </div>
                </div>
                <div class="flex gap-[6px] ml-auto mt-[1px] text-white">
                    <div class="flex items-center justify-center w-[23px] h-[23px] rounded-md border border-[#2b3138] bg-[#1a1f22]"><svg class="size-[12px] fill-none stroke-current stroke-[1.500]"><use href="#copy"/></svg></div>
                    <div class="flex items-center justify-center w-[23px] h-[23px] rounded-md border border-[#2b3138] bg-[#1a1f22]"><svg class="size-[12px] fill-none stroke-current stroke-[1.500]"><use href="#trash"/></svg></div>
                </div>
            </div>
            <div class="grid grid-cols-5 w-[194px] h-[26px] ml-[8px] rounded-md border border-[#1d2225] bg-[#1d2225]">
                <div class="flex items-center justify-center rounded-md bg-[#0e1113] text-white"><svg class="size-[14px] fill-none stroke-current stroke-[1.600]"><use href="#design"/></svg></div>
                <div class="flex items-center justify-center text-[#7d8790]"><svg class="size-[14px] fill-none stroke-current stroke-[1.200]"><use href="#actions"/></svg></div>
                <div class="flex items-center justify-center text-[#7d8790]"><svg class="size-[14px] fill-none stroke-current stroke-[1.300]"><use href="#database"/></svg></div>
                <div class="flex items-center justify-center text-[#7d8790]"><svg class="size-[13px]"><use href="#play"/></svg></div>
                <div class="flex items-center justify-center text-[#7d8790]"><svg class="size-[14px] fill-none stroke-current stroke-[1.300]"><use href="#clip"/></svg></div>
            </div>

            <section class="h-[70px] border-b border-[#262d34] pl-2 pr-2 pt-[7px]">
                <div class="flex items-center h-[18px] text-white font-bold text-[9.250px]">
                    <span>Visibility</span>
                    <svg class="size-[9px] ml-[3px] mt-px fill-none stroke-[#6b757e] stroke-[1.300]"><use href="#info"/></svg>
                    <svg class="size-[12px] ml-auto fill-none stroke-[#95a1ac] stroke-[1.500]"><use href="#chevron"/></svg>
                </div>
                <div class="flex">
                    <div class="w-[133px] h-6">
                        <div class="flex items-center h-[17px] text-[9.300px]">
                            <span>Opacity</span>
                            <svg class="size-[9px] ml-1 fill-none stroke-[#6b757e] stroke-[1.300]"><use href="#info"/></svg>
                            <svg class="w-[11px] h-[10px] ml-[3px] mt-px fill-none stroke-[#a3614a] stroke-[1.500]"><use href="#var"/></svg>
                        </div>
                        <div class="flex items-center h-[14px] pl-[5px]">
                            <div class="w-[120px] h-[3.500px] rounded-l-full bg-[#4b2fd8]"></div>
                            <div class="size-[9px] rounded-full bg-white"></div>
                        </div>
                    </div>
                    <div class="flex items-center w-[56px] h-[23px] ml-[6px] pl-[7px] rounded-md border border-[#262d34] text-white text-[11px]">1</div>
                </div>
            </section>

            <section class="h-[141px] border-b border-[#262d34] pl-2 pr-2 pt-[4px]">
                <div class="flex items-center h-[18px] text-white font-bold text-[9.350px]">
                    <span>Page (Scaffold) Properties</span>
                    <svg class="size-[9px] ml-1 mt-px fill-none stroke-[#6b757e] stroke-[1.300]"><use href="#info"/></svg>
                    <svg class="size-[12px] ml-auto fill-none stroke-[#95a1ac] stroke-[1.500]"><use href="#chevron"/></svg>
                </div>
                <div class="flex items-center h-4 text-[9.150px]">
                    <span>Background Color</span>
                    <svg class="w-[11px] h-[10px] ml-[3px] mt-[2px] fill-none stroke-[#a3614a] stroke-[1.500]"><use href="#var"/></svg>
                </div>
                <div class="flex items-center justify-between w-[93px] h-[24px] pl-[8px] pr-2 rounded-md border border-[#262d34] text-white text-[8px] font-medium leading-[10px] font-['Inter',sans-serif]">
                    <span class="tracking-[-0.200px]">Primary<br>Background</span>
                    <span class="size-[9px] rounded-[2px] bg-white"></span>
                </div>
                <div class="flex items-center h-[24px] mt-[1.500px]">
                    <span>Safe Area</span>
                    <svg class="size-[10px] ml-[5px] fill-none stroke-[#6b757e] stroke-[1.300]"><use href="#info"/></svg>
                    <div class="flex justify-end w-[30px] h-[17px] p-[.500px] ml-auto rounded-full bg-[#4b2fd8]"><div class="size-4 rounded-full bg-white"></div></div>
                </div>
                <div class="flex items-center h-[24px]">
                    <span>Hide Keyboard on Tap</span>
                    <svg class="size-[10px] ml-[4px] fill-none stroke-[#6b757e] stroke-[1.300]"><use href="#info"/></svg>
                    <div class="flex justify-end w-[30px] h-[17px] p-[.500px] ml-auto rounded-full bg-[#4b2fd8]"><div class="size-4 rounded-full bg-white"></div></div>
                </div>
                <div class="flex items-center h-[24px]">
                    <span>Disable Android Back Button</span>
                    <svg class="size-[10px] ml-[4px] fill-none stroke-[#6b757e] stroke-[1.300]"><use href="#info"/></svg>
                    <div class="flex items-center w-[30px] h-[17px] pl-px ml-auto rounded-full border border-[#1f2529]"><div class="size-[14px] rounded-full bg-[#2b3138]"></div></div>
                </div>
            </section>

            <section class="pl-2 pr-2 pt-[4px]">
                <div class="flex items-center h-[18px] text-white font-bold text-[9.200px]">
                    <span>Nav Bar Item Properties</span>
                    <svg class="size-[9px] ml-[3px] mt-px fill-none stroke-[#6b757e] stroke-[1.300]"><use href="#info"/></svg>
                    <svg class="size-[12px] ml-auto fill-none stroke-[#95a1ac] stroke-[1.500]"><use href="#chevron"/></svg>
                </div>
                <div class="flex items-center h-[24px]">
                    <span>Show on Nav Bar</span>
                    <div class="flex items-center w-[30px] h-[17px] pl-px ml-auto rounded-full border border-[#1f2529]"><div class="size-[14px] rounded-full bg-[#2b3033]"></div></div>
                </div>
                <div class="flex items-center h-[24px]">
                    <span>Always Show Nav Bar on Page</span>
                    <svg class="size-[10px] ml-[4px] fill-none stroke-[#6b757e] stroke-[1.300]"><use href="#info"/></svg>
                    <div class="flex items-center w-[30px] h-[17px] pl-px ml-auto rounded-full border border-[#1a1f22]"><div class="size-[14px] rounded-full bg-[#212629]"></div></div>
                </div>
            </section>
        </aside>
    </div>

    <!-- Floating search button -->
    <div class="absolute left-[1152px] top-[618px] flex items-center justify-center size-[34px] rounded-full bg-[#4b28ea]">
        <svg class="size-[22px] fill-none stroke-white" viewBox="0 0 22 22"><circle cx="9.500" cy="9" r="7.300" stroke-width="1.600"/><path d="M6 11q3.500 2.500 7 0" stroke-width="1.200"/><path d="M14.500 14.500l5.500 5" stroke-width="2.800"/></svg>
    </div>

    <!-- Mouse pointer -->
    <svg class="absolute left-[558px] top-[63px] w-[11px] h-[17px] fill-white" viewBox="0 0 11 17"><path d="M.8.500v13.800l3.100-2.900 2.200 4.700 2.400-1.100-2.200-4.600h4z"/></svg>
</body>
</html>
